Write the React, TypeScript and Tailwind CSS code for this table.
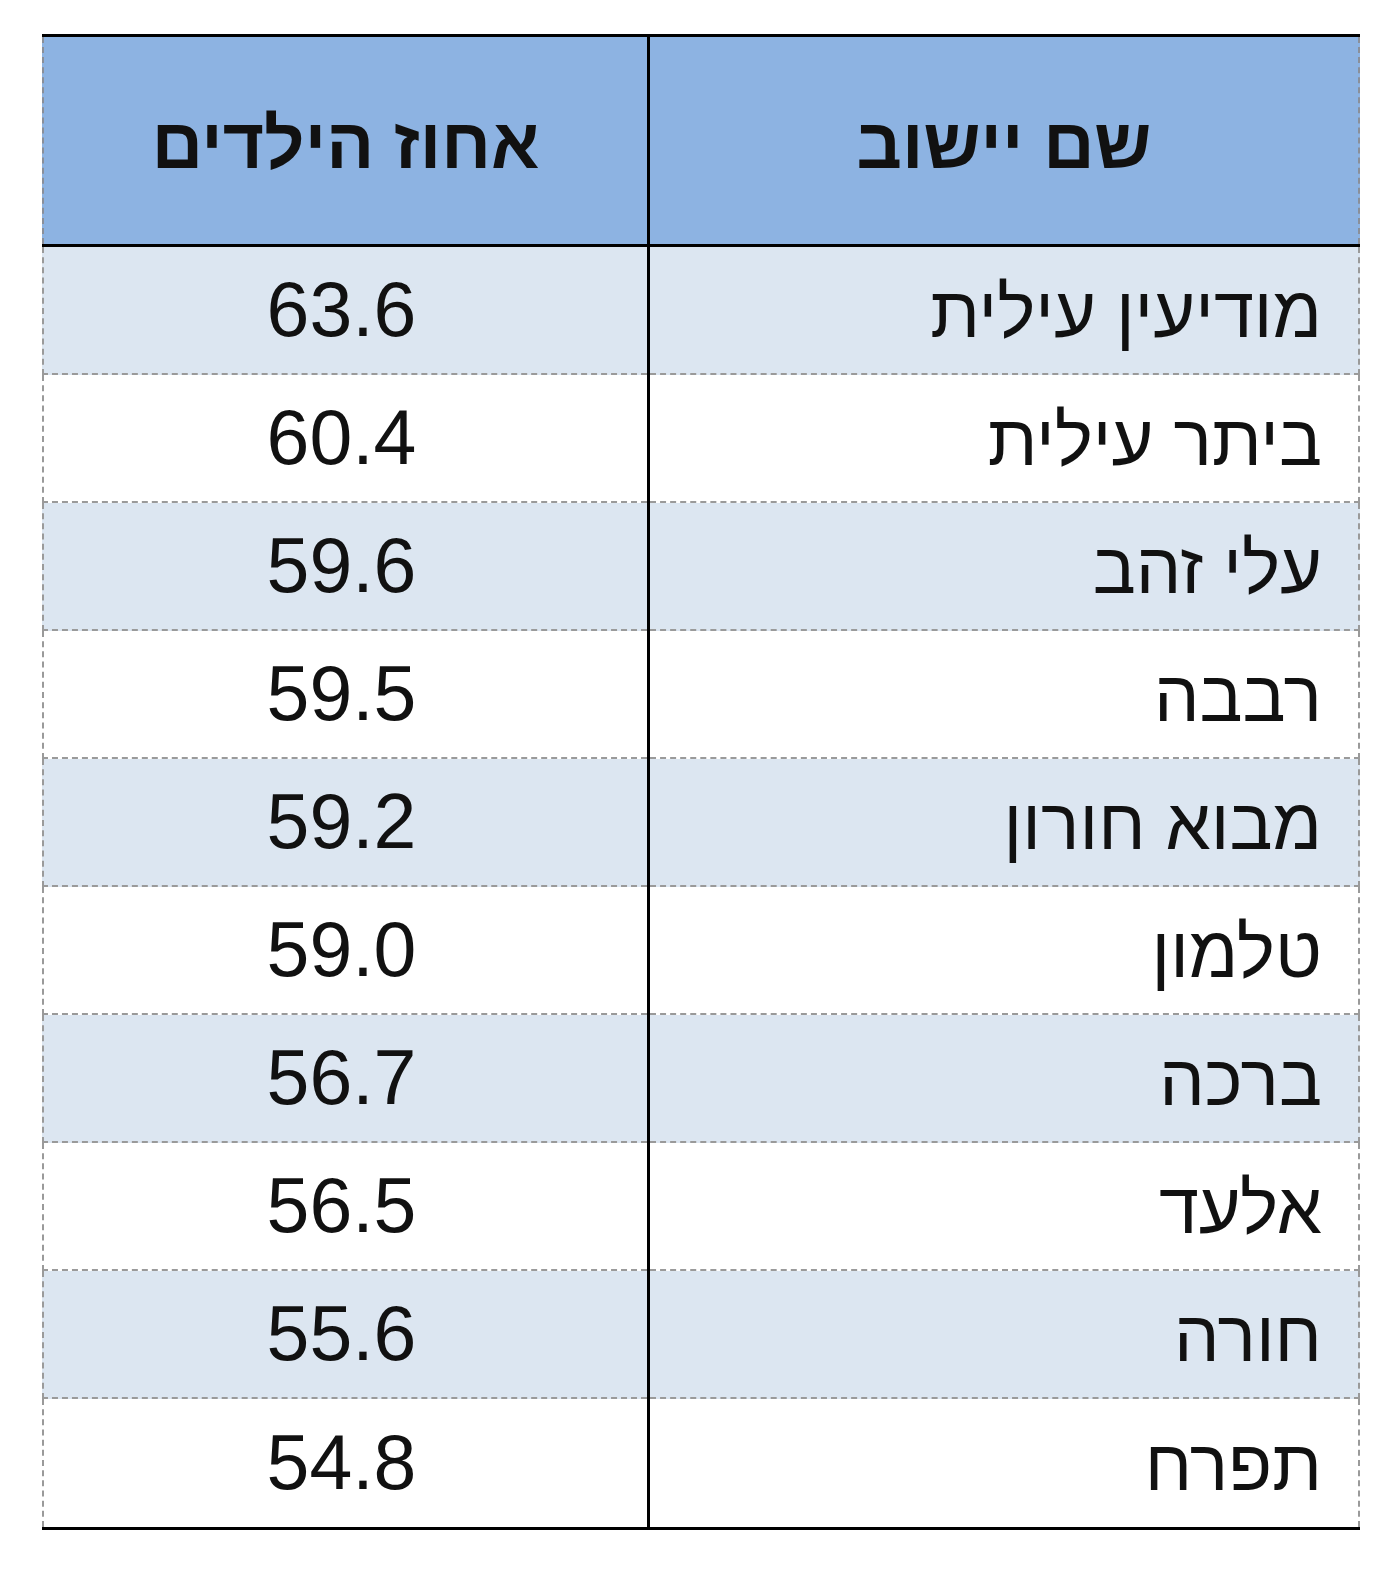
const rows: [string, string][] = [
  ["מודיעין עילית", "63.6"],
  ["ביתר עילית", "60.4"],
  ["עלי זהב", "59.6"],
  ["רבבה", "59.5"],
  ["מבוא חורון", "59.2"],
  ["טלמון", "59.0"],
  ["ברכה", "56.7"],
  ["אלעד", "56.5"],
  ["חורה", "55.6"],
  ["תפרח", "54.8"],
];

export default function App() {
  return (
    <div className="min-h-[1571px] bg-white pl-[42px] pt-[34px] font-['Liberation_Sans','Noto_Sans',Arial,sans-serif] text-[#111]">
      <div dir="rtl" className="w-[1318px] border-y-[3px] border-black">
        {/* header */}
        <div className="flex h-[207px] bg-[#8db3e2] text-[71px] font-bold">
          <div className="flex w-[710px] items-center justify-center border-r-2 border-dashed border-[#8a8f99] pt-2">
            שם יישוב
          </div>
          <div className="w-[3px] bg-black" />
          <div className="flex flex-1 items-center justify-center border-l-2 border-dashed border-[#8a8f99] pt-2">
            אחוז הילדים
          </div>
        </div>
        <div className="h-[3px] bg-black" />
        {rows.map(([name, value], i) => {
          const last = i === rows.length - 1;
          return (
            <div
              key={name}
              className={
                "flex h-[128px] " +
                (i % 2 === 0 ? "bg-[#dce6f1]" : "bg-white")
              }
            >
              <div
                className={
                  "flex w-[710px] items-center border-r-2 border-dashed border-[#9a9a9a] pr-[36px] pt-1 text-[72px] " +
                  (last ? "" : "border-b-2")
                }
              >
                {name}
              </div>
              <div className="w-[3px] bg-black" />
              <div
                className={
                  "flex flex-1 items-center justify-center border-l-2 border-dashed border-[#9a9a9a] pr-2 text-[77px] " +
                  (last ? "" : "border-b-2")
                }
              >
                <span dir="ltr">{value}</span>
              </div>
            </div>
          );
        })}
      </div>
    </div>
  );
}
